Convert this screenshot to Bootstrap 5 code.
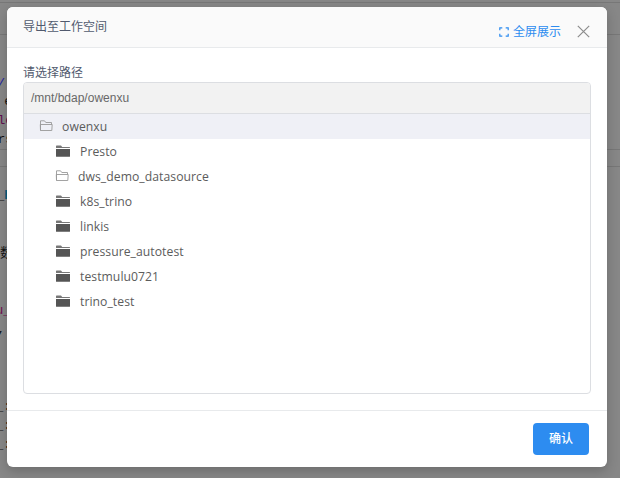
<!DOCTYPE html>
<html lang="zh-CN">
<head>
<meta charset="utf-8">
<title>导出至工作空间</title>
<link href="https://cdn.jsdelivr.net/npm/bootstrap@5.3.0/dist/css/bootstrap.min.css" rel="stylesheet">
<style>
body{height:478px;background:#878787;font-family:"Liberation Sans","Noto Sans CJK SC",sans-serif;font-size:12px;color:#515a6e}
.editor{position:absolute;inset:0;z-index:0;overflow:hidden}
.editor hr{position:absolute;left:0;right:0;margin:0;border:0;height:1px;background:#777;opacity:1}
.editor span{position:absolute;right:613px;font:13px/16px "Liberation Mono","Noto Sans CJK SC",monospace;color:#111;white-space:pre}
.dialog{position:relative;z-index:1;width:600px;height:460px;margin:7px 0 0 7px;background:#fff;border-radius:6px;box-shadow:0 4px 12px rgba(0,0,0,.2)}
.dialog-head{height:41px;background:#fafafa;border-bottom:1px solid #e8eaec;border-radius:6px 6px 0 0;padding:0 17px 0 16px}
.dialog-title{font-size:12px;line-height:16px;padding-top:12px}
.full{color:#2d8cf0;line-height:16px;padding-top:17px;margin-right:16px}
.full svg{margin-right:4px}
.dismiss{padding:0;border:0;background:none;line-height:0;margin-top:18px;width:13px;height:13px}
.dialog-main{height:362px;padding:17px 16px 0}
.dialog-main label{line-height:16px;display:block;margin-bottom:1px}
.picker{height:312px;border:1px solid #dcdee2;border-radius:4px}
.path{height:31px;background:#f2f2f2;border-bottom:1px solid #dcdee2;border-radius:3px 3px 0 0;padding:0 7px;line-height:30px;color:#686868}
.node{height:25px;padding-left:32px;font:12.2px/25px "Open Sans",sans-serif;letter-spacing:.05px;color:#5c5c5c}
.node svg{margin-right:10px;margin-bottom:2px;flex:none}
.node.open svg,.node.root svg{margin-right:9px;margin-left:-1px}
.node.root{padding-left:16px;background:#eff0f6}
.dialog-foot{height:57px;border-top:1px solid #e8eaec;padding:12px 18px}
.confirm{width:56px;height:32px;padding:0;background:#2d8cf0;border:0;border-radius:4px;color:#fff;font-size:12px;font-weight:500;line-height:30px}
.stamp{position:absolute;inset:0;z-index:2;pointer-events:none}
</style>
<script src="https://cdn.jsdelivr.net/npm/bootstrap@5.3.0/dist/js/bootstrap.bundle.min.js"></script>
</head>
<body class="overflow-hidden">
<div class="editor" aria-hidden="true">
<hr style="top:2px"><hr style="top:34px"><hr style="top:149px"><hr style="top:166px">
<span style="top:76px;color:#2424a0;right:615px">/</span><span style="top:94px;right:608px">e</span><span style="top:113px;color:#601050;right:607px">le</span><span style="top:132px;right:607px">rs</span>
<span style="top:188px;right:608px">_<b style="color:#075b7a">h</b></span><span style="top:246px;right:607px">数</span><span style="top:303px;color:#701050;right:609px">u_</span><span style="top:322px;right:615px">,</span>
<span style="top:399px;right:609px">_:</span><span style="top:418px;right:609px">_:</span><span style="top:437px;right:609px">_:</span>
</div>
<main class="dialog d-flex flex-column">
<header class="dialog-head d-flex align-items-start">
<div class="dialog-title me-auto">导出至工作空间</div>
<a class="full d-flex align-items-center text-decoration-none" href="#"><svg width="10" height="10" viewBox="0 0 10 10" fill="none" stroke="#2d8cf0" stroke-width="1.2"><path d="M3.3.8H.8v2.5M6.7.8h2.5v2.5M9.2 6.7v2.5H6.7M3.3 9.2H.8V6.7"/></svg>全屏展示</a>
<button class="dismiss" aria-label="关闭"><svg width="13" height="13" viewBox="0 0 13 13" stroke="#8c8c8c" stroke-width="1.2"><path d="M.8.8l11.4 11.4M12.2.8L.8 12.2"/></svg></button>
</header>
<section class="dialog-main">
<label>请选择路径</label>
<div class="picker">
<div class="path">/mnt/bdap/owenxu</div>
<svg width="0" height="0" class="d-none"><defs>
<symbol id="closed" viewBox="0 0 14 12"><path fill="#777" d="M0 1Q0 .4.6.4H5L6.2 2H13.4q.6 0 .6.6V3H0z"/><path fill="#555" d="M0 4h14v7.2q0 .5-.5.5H.5Q0 11.7 0 11.2z"/></symbol>
<symbol id="outline" viewBox="0 0 14 12"><path fill="none" stroke="#999" stroke-width=".9" d="M1.5 10.5V.8h4L6.8 2.5h5.7v2M1.5 10.5h11.3l.4-6H1.3z"/></symbol>
</defs></svg>
<div class="node root d-flex align-items-center"><svg width="14" height="12"><use href="#outline"/></svg><span>owenxu</span></div>
<div class="node d-flex align-items-center"><svg width="14" height="12"><use href="#closed"/></svg><span>Presto</span></div>
<div class="node open d-flex align-items-center"><svg width="14" height="12"><use href="#outline"/></svg><span>dws_demo_datasource</span></div>
<div class="node d-flex align-items-center"><svg width="14" height="12"><use href="#closed"/></svg><span>k8s_trino</span></div>
<div class="node d-flex align-items-center"><svg width="14" height="12"><use href="#closed"/></svg><span>linkis</span></div>
<div class="node d-flex align-items-center"><svg width="14" height="12"><use href="#closed"/></svg><span>pressure_autotest</span></div>
<div class="node d-flex align-items-center"><svg width="14" height="12"><use href="#closed"/></svg><span>testmulu0721</span></div>
<div class="node d-flex align-items-center"><svg width="14" height="12"><use href="#closed"/></svg><span>trino_test</span></div>
</div>
</section>
<footer class="dialog-foot d-flex justify-content-end"><button class="confirm">确认</button></footer>
</main>
<svg class="stamp" width="620" height="478" font-family="Liberation Mono, monospace" font-size="16" fill="#000" fill-opacity=".02" aria-hidden="true">
<g id="marks"></g>
</svg>
<script>
const marks = document.getElementById('marks');
[[137,50],[238,151],[339,252],[440,353],[541,454],[-67,254],[34,355],[135,456],[542,50],[643,151],[36,-51]].forEach(([x, y]) => {
  const t = document.createElementNS('http://www.w3.org/2000/svg', 'text');
  t.setAttribute('transform', `translate(${x + 4} ${y + 2}) rotate(-45)`);
  t.setAttribute('textLength', 208);
  t.textContent = 'OWENXUKF1.2023-05-22';
  marks.append(t);
});
</script>
</body>
</html>
